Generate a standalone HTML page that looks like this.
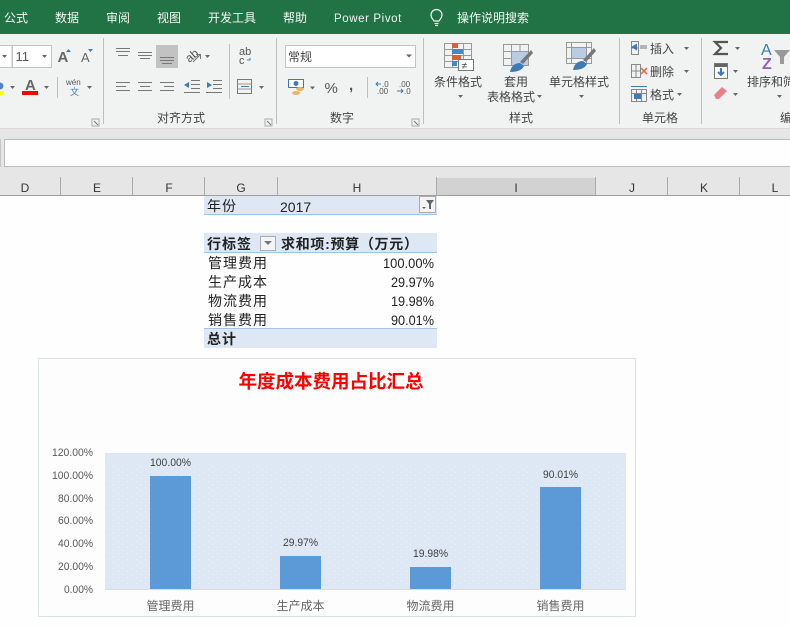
<!DOCTYPE html>
<html lang="zh"><head><meta charset="utf-8"><title>Excel</title>
<style>
html,body{margin:0;padding:0;background:#fff;width:790px;height:628px;overflow:hidden}
svg{display:block}
text{font-family:"Liberation Sans","Noto Sans CJK SC",sans-serif}
</style></head><body>
<svg width="790" height="628" viewBox="0 0 790 628" xmlns="http://www.w3.org/2000/svg">
<defs>
<pattern id="sp" width="9" height="6" patternUnits="userSpaceOnUse"><rect x="1" y="1" width="1" height="1" fill="#eaf3f9"/><rect x="5" y="4" width="1" height="1" fill="#eaf3f9"/></pattern>
</defs>
<!-- backgrounds -->
<rect width="790" height="628" fill="#fefefe"/>
<rect width="790" height="34" fill="#217346"/>
<rect y="34" width="790" height="94" fill="#f1f3f2"/>
<rect y="128" width="790" height="1" fill="#e3d3da"/>
<rect y="129" width="790" height="66" fill="#e6e6e6"/>
<rect x="4.500" y="139.500" width="790" height="27" fill="#fefefe" stroke="#bdbdbd"/>
<rect x="0" y="139" width="1" height="28" fill="#c4c4c4"/>
<!-- tabs -->
<g fill="#f2f7f4" font-size="12">
<text x="4" y="22">公式</text><text x="55" y="22">数据</text><text x="106" y="22">审阅</text><text x="157" y="22">视图</text><text x="208" y="22">开发工具</text><text x="283" y="22">帮助</text>
<text x="334" y="22" font-size="11.500" letter-spacing=".6">Power Pivot</text><text x="457" y="22">操作说明搜索</text>
</g>
<g fill="none" stroke="#f2f7f4" stroke-width="1.200"><path d="M434 21c-1-2-3-3-3-6a5.500 5.500 0 0 1 11 0c0 3-2 4-3 6z"/><path d="M434.500 23.500h4M435 25.500h3"/></g>
<!-- ribbon dividers -->
<g fill="#c0bdbd"><rect x="103" y="38" width="1" height="86"/><rect x="276" y="38" width="1" height="86"/><rect x="423" y="38" width="1" height="86"/><rect x="619" y="38" width="1" height="86"/><rect x="701" y="38" width="1" height="86"/><rect x="229" y="44" width="1" height="55"/><rect x="57" y="77" width="1" height="21"/><rect x="367" y="77" width="1" height="21"/></g>
<!-- font group -->
<rect x="-5" y="45.500" width="17" height="22" fill="#fff" stroke="#c4c4c4"/><rect x="12.500" y="45.500" width="39" height="22" fill="#fff" stroke="#c4c4c4"/>
<text x="15.500" y="61" font-size="13" fill="#555">11</text>
<g fill="#666"><path d="M2 55h5l-2.500 3zM42 55h5l-2.500 3z"/><path d="M10 86h5l-2.500 3zM44 86h5l-2.500 3zM87 86h5l-2.500 3z"/></g>
<text x="57.500" y="62" font-size="15" font-weight="bold" fill="#666">A</text><path d="M66 52h5l-2.500-3z" fill="#3e7ab8"/>
<text x="81" y="62" font-size="13" fill="#666">A</text><path d="M88 49h5l-2.500 3z" fill="#3e7ab8"/>
<text x="25" y="90" font-size="15" font-weight="bold" fill="#666">A</text><rect x="22" y="91" width="16" height="4" fill="#f00"/>
<rect x="0" y="91" width="4" height="4" fill="#ff0"/><circle cx="0" cy="86" r="3.500" fill="#4d86c0"/>
<text x="66" y="85" font-size="8" fill="#555">wén</text><text x="70" y="95" font-size="9" fill="#3c7fbb">文</text>
<!-- alignment -->
<g fill="none" stroke="#777" stroke-width="1">
<path d="M116 48.500h14M116 51.500h14M118 55.500h10"/><path d="M138 52.500h14M138 55.500h14M140 58.500h10"/>
<path d="M116 82.500h14M116 86.500h10M116 90.500h14"/><path d="M138 82.500h14M140 86.500h10M138 90.500h14"/><path d="M160 82.500h14M164 86.500h10M160 90.500h14"/>
<path d="M191 80.500h9M191 84.500h9M191 88.500h9M184 92.500h16"/><path d="M213 80.500h9M213 84.500h9M213 88.500h9M206 92.500h16"/>
</g>
<rect x="156" y="45" width="22" height="23" fill="#c2c2c2"/><path d="M160 57.500h14M160 60.500h14M162 63.500h10" stroke="#777" fill="none"/>
<g fill="#3e7ab8"><path d="M184 85l5-3v6z"/><path d="M212 85l-5-3v6z"/></g>
<text x="185" y="61" font-size="12" fill="#555" transform="rotate(-40 190 56)">ab</text><path d="M193 62l7-7M196 54.500h4.500v4.500" stroke="#777" fill="none"/><path d="M205 55h5l-2.500 3z" fill="#666"/>
<text x="239" y="55" font-size="11" fill="#555">ab</text><text x="239" y="64" font-size="11" fill="#555">c</text><path d="M250 58v2h-3" stroke="#3e7ab8" fill="none"/>
<rect x="237.500" y="79.500" width="14" height="14" fill="none" stroke="#777"/><path d="M237.500 84h14M237.500 89h14" stroke="#999"/><path d="M241 86.500h8" stroke="#3e7ab8"/><path d="M259 86h5l-2.500 3z" fill="#666"/>
<text x="157" y="122" font-size="12" fill="#444">对齐方式</text>
<path d="M92 119h7v7h-7zM265 119h7v7h-7zM412 119h7v7h-7z" fill="none" stroke="#aaa"/>
<path d="M94 121l4 4M267 121l4 4M414 121l4 4" stroke="#777"/>
<!-- number -->
<rect x="285.500" y="45.500" width="130" height="22" fill="#fff" stroke="#c4c4c4"/>
<text x="288" y="61" font-size="12" fill="#444">常规</text><path d="M406 54.500h6l-3 3z" fill="#666"/>
<rect x="288.500" y="79.500" width="15" height="8" fill="#fff" stroke="#3e7ab8"/><circle cx="296" cy="83.500" r="2.500" fill="#3e7ab8"/><ellipse cx="300" cy="89" rx="4" ry="2" fill="#eab766"/><ellipse cx="296" cy="93" rx="4" ry="2" fill="#eab766"/><path d="M310 86.500h5l-2.500 3z" fill="#666"/>
<text x="324.500" y="93" font-size="15" fill="#555">%</text><text x="349" y="90" font-size="15" fill="#555" font-weight="bold">,</text>
<text x="382" y="87" font-size="8" fill="#555">.0</text><text x="377" y="94" font-size="8" fill="#555">.00</text><path d="M381 84h-5m2-2l-2 2 2 2" stroke="#3e7ab8" fill="none"/>
<text x="399" y="87" font-size="8" fill="#555">.00</text><text x="404" y="94" font-size="8" fill="#555">.0</text><path d="M397 91h6m-2-2l2 2-2 2" stroke="#3e7ab8" fill="none"/>
<text x="330" y="122" font-size="12" fill="#444">数字</text>
<!-- styles -->
<g fill="none" stroke="#999"><path d="M444.500 43.500h27v24h-27zM444.500 49.500h27M444.500 55.500h27M444.500 61.500h27M452.500 43.500v24M463.500 43.500v24"/></g>
<rect x="452" y="43" width="6" height="5" fill="#d9603a"/><rect x="452" y="49" width="11" height="5" fill="#4a86bf"/><rect x="452" y="55" width="9" height="5" fill="#d9603a"/><rect x="452" y="61" width="5" height="5" fill="#4a86bf"/>
<rect x="458.500" y="59.500" width="15" height="11" fill="#fff" stroke="#777"/><text x="461.500" y="69" font-size="10" fill="#444">≠</text>
<text x="434" y="86" font-size="12" fill="#444">条件格式</text><path d="M458 95h5l-2.500 3z" fill="#666"/>
<path d="M503.500 44.500h25v21h-25zM503.500 51.500h25M503.500 58.500h25M511.500 44.500v21M520 44.500v21" fill="none" stroke="#999"/><rect x="512" y="52" width="16" height="13" fill="#b9cce4"/><path d="M510 72c1-6 5-9 10-9l4 3c-2 4-6 6-14 6z" fill="#3e7ab8"/><path d="M520 62l11-12 2 3-10 11z" fill="#777"/>
<text x="504" y="86" font-size="12" fill="#444">套用</text><text x="487" y="101" font-size="12" fill="#444">表格格式</text><path d="M537 95h5l-2.500 3z" fill="#666"/>
<path d="M566.500 42.500h25v21h-25zM566.500 47.500h25M571.500 42.500v21M586.500 42.500v21M566.500 58.500h25" fill="none" stroke="#999"/><rect x="572" y="48" width="14" height="10" fill="#b9cce4"/><path d="M573 70c1-6 5-9 10-9l4 3c-2 4-6 6-14 6z" fill="#3e7ab8"/><path d="M583 60l11-12 2 3-10 11z" fill="#777"/>
<text x="549" y="86" font-size="12" fill="#444">单元格样式</text><path d="M579 95h5l-2.500 3z" fill="#666"/>
<text x="509" y="122" font-size="12" fill="#444">样式</text>
<!-- cells -->
<g fill="none" stroke="#888"><path d="M631.500 41.500h7v13h-7zM631.500 48h7"/><path d="M631.500 64.500h9v13h-9zM631.500 71h9M636 64.500v13"/><path d="M631.500 89.500h15v12h-15zM631.500 93.500h15M636.500 89.500v12M641.500 89.500v12"/></g>
<path d="M640 49h7v-4h-7z" fill="#b5b5b5"/><path d="M631 47l6-3.500v7z" fill="#3e7ab8"/><path d="M641 68l6 6M647 68l-6 6" stroke="#e1674a" stroke-width="1.500"/><rect x="634" y="94" width="7" height="5" fill="#3e7ab8"/><path d="M631 86.500h16" stroke="#3e7ab8"/>
<g font-size="12" fill="#444"><text x="650" y="53">插入</text><text x="650" y="76">删除</text><text x="650" y="99">格式</text></g>
<g fill="#666"><path d="M684 47h5l-2.500 3zM684 70h5l-2.500 3zM677 93h5l-2.500 3z"/></g>
<text x="642" y="122" font-size="12" fill="#444">单元格</text>
<!-- editing -->
<path d="M728 42h-13l6 6-6 6h13" fill="none" stroke="#555" stroke-width="2.200"/><path d="M735 47h5l-2.500 3zM733 70h5l-2.500 3zM733 93h5l-2.500 3z" fill="#666"/>
<rect x="714.500" y="63.500" width="13" height="15" fill="#fff" stroke="#777"/><rect x="715" y="64" width="12" height="3" fill="#666"/><path d="M721 68v7M718 72l3 3 3-3" stroke="#3e7ab8" stroke-width="2" fill="none"/>
<path d="M714 95l8-8 5 4-8 8h-3z" fill="#ea7e8d"/>
<text x="761" y="55" font-size="16" fill="#3e7ab8">A</text><text x="762" y="69" font-size="16" fill="#9a5fbd" font-weight="bold">Z</text><path d="M774 50h16l-6 7v7h-4v-7z" fill="#999"/>
<text x="747" y="86" font-size="12" fill="#444">排序和筛选</text><path d="M777 95h5l-2.500 3z" fill="#666"/>
<text x="780" y="122" font-size="12" fill="#444">编辑</text>
<!-- column headers -->
<rect x="436" y="178" width="160" height="17" fill="#d2d2d2"/>
<rect y="195" width="790" height="1" fill="#9e9e9e"/>
<g fill="#ababab"><rect x="60" y="177" width="1" height="18"/><rect x="132" y="177" width="1" height="18"/><rect x="204" y="177" width="1" height="18"/><rect x="277" y="177" width="1" height="18"/><rect x="436" y="177" width="1" height="18"/><rect x="595" y="177" width="1" height="18"/><rect x="667" y="177" width="1" height="18"/><rect x="739" y="177" width="1" height="18"/></g>
<g font-size="12" fill="#333" text-anchor="middle"><text x="25" y="192">D</text><text x="97" y="192">E</text><text x="169" y="192">F</text><text x="241" y="192">G</text><text x="357" y="192">H</text><text x="516" y="192">I</text><text x="632" y="192">J</text><text x="704" y="192">K</text><text x="775" y="192">L</text></g>
<!-- pivot table -->
<rect x="204" y="196" width="233" height="18" fill="#dde8f4"/><rect x="204" y="214" width="233" height="1" fill="#9fc6ea"/>
<text x="207" y="211" font-size="14" letter-spacing="1" fill="#222">年份</text><text x="280" y="212" font-size="14" fill="#222">2017</text>
<rect x="419.500" y="196.500" width="16" height="16" fill="#f4f4f4" stroke="#aaa"/><path d="M426 200h8l-3 4v5h-2v-5z" fill="#666"/><path d="M422 207h4l-2 2z" fill="#666"/>
<rect x="204" y="233" width="233" height="19" fill="#dde8f4"/><rect x="204" y="252" width="233" height="1" fill="#9fc6ea"/>
<text x="207" y="249" font-size="14" letter-spacing="1" font-weight="bold" fill="#222">行标签</text>
<rect x="260.500" y="236.500" width="15" height="14" fill="#f4f4f4" stroke="#aaa"/><path d="M264 241h8l-4 4z" fill="#777"/>
<text x="281" y="249" font-size="14" letter-spacing=".7" font-weight="bold" fill="#222">求和项:预算（万元）</text>
<g font-size="14" letter-spacing="1" fill="#222"><text x="208" y="268">管理费用</text><text x="208" y="287">生产成本</text><text x="208" y="306">物流费用</text><text x="208" y="325">销售费用</text></g>
<g font-size="14" fill="#222" text-anchor="end"><text x="434" y="268" textLength="51" lengthAdjust="spacingAndGlyphs">100.00%</text><text x="434" y="287" textLength="43" lengthAdjust="spacingAndGlyphs">29.97%</text><text x="434" y="306" textLength="43" lengthAdjust="spacingAndGlyphs">19.98%</text><text x="434" y="325" textLength="43" lengthAdjust="spacingAndGlyphs">90.01%</text></g>
<rect x="204" y="329" width="233" height="19" fill="#dde8f4"/><rect x="204" y="328" width="233" height="1" fill="#9fc6ea"/>
<text x="207" y="344" font-size="14" letter-spacing="1" font-weight="bold" fill="#222">总计</text>
<!-- chart -->
<rect x="38.500" y="358.500" width="597" height="258" fill="#fdfdfd" stroke="#d6e7e2"/>
<text x="331" y="388" font-size="18.500" font-weight="bold" fill="#f00" text-anchor="middle">年度成本费用占比汇总</text>
<rect x="105" y="453" width="521" height="137" fill="#dde8f4"/>
<rect x="107" y="464" width="517" height="125" fill="url(#sp)"/>
<rect x="105" y="589" width="521" height="1" fill="#dcdcdc"/>
<g fill="#5b9ad6"><rect x="150" y="476" width="41" height="113"/><rect x="280" y="556" width="41" height="33"/><rect x="410" y="567" width="41" height="22"/><rect x="540" y="487" width="41" height="102"/></g>
<g font-size="11" fill="#595959" text-anchor="end"><text x="93" y="456" textLength="41" lengthAdjust="spacingAndGlyphs">120.00%</text><text x="93" y="479" textLength="41" lengthAdjust="spacingAndGlyphs">100.00%</text><text x="93" y="502" textLength="35" lengthAdjust="spacingAndGlyphs">80.00%</text><text x="93" y="524" textLength="35" lengthAdjust="spacingAndGlyphs">60.00%</text><text x="93" y="547" textLength="35" lengthAdjust="spacingAndGlyphs">40.00%</text><text x="93" y="570" textLength="35" lengthAdjust="spacingAndGlyphs">20.00%</text><text x="93" y="593" textLength="29" lengthAdjust="spacingAndGlyphs">0.00%</text></g>
<g font-size="11" fill="#404040" text-anchor="middle"><text x="170.500" y="466" textLength="41" lengthAdjust="spacingAndGlyphs">100.00%</text><text x="300.500" y="546" textLength="35" lengthAdjust="spacingAndGlyphs">29.97%</text><text x="430.500" y="557" textLength="35" lengthAdjust="spacingAndGlyphs">19.98%</text><text x="560.500" y="478" textLength="35" lengthAdjust="spacingAndGlyphs">90.01%</text></g>
<g font-size="12" fill="#666" text-anchor="middle"><text x="170.500" y="610">管理费用</text><text x="300.500" y="610">生产成本</text><text x="430.500" y="610">物流费用</text><text x="560.500" y="610">销售费用</text></g>
</svg>
</body></html>
